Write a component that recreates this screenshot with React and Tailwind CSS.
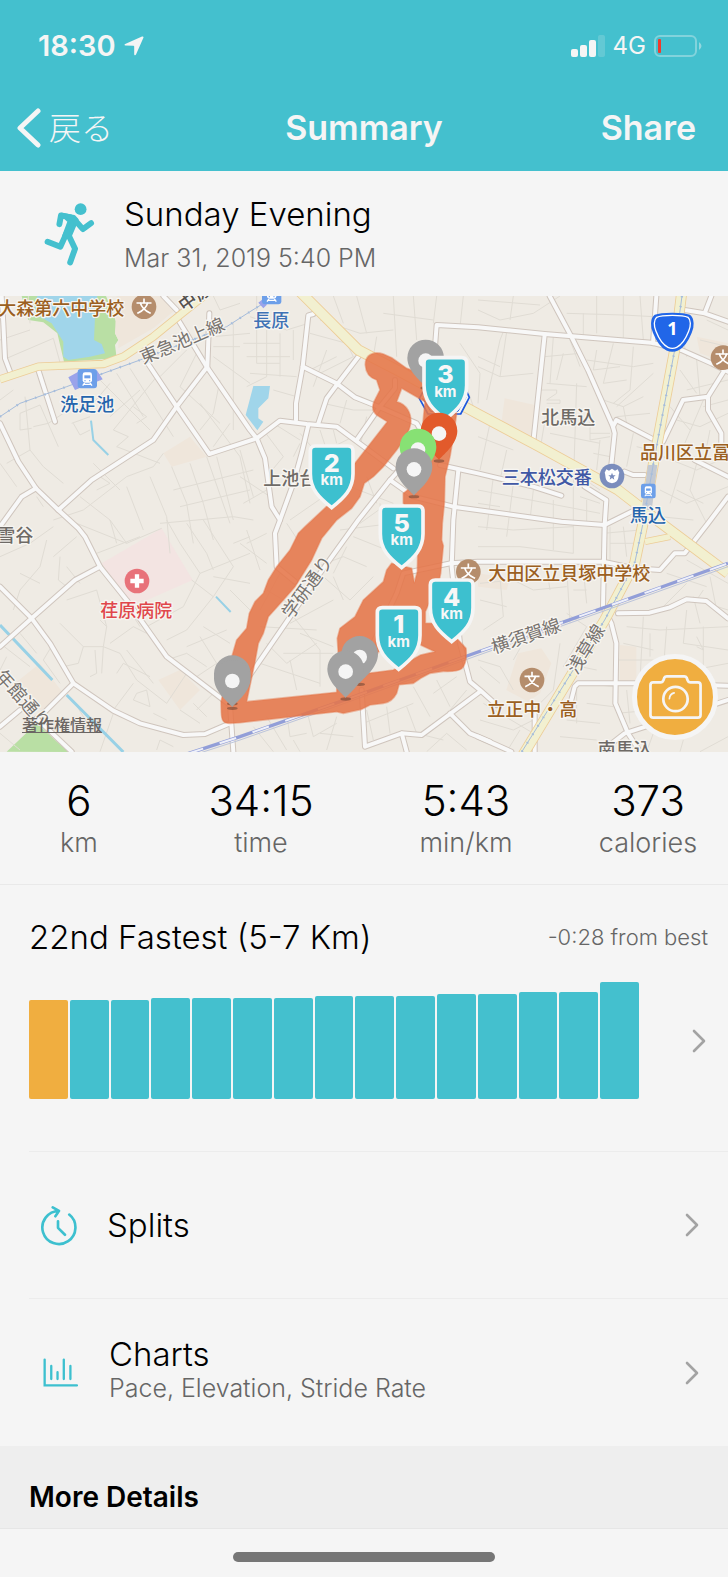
import { useState } from "react";

const bars = [99, 99, 99, 101, 101, 101, 101, 103, 103, 103, 105, 105, 107, 107, 117];

const stats = [
  { value: "6", label: "km" },
  { value: "34:15", label: "time" },
  { value: "5:43", label: "min/km" },
  { value: "373", label: "calories" },
];

// Map geometry, three units to one screen pixel
const lanes = [
  "M0 150L90 120M20 205L160 145L185 235M85 18L90 100M0 330L40 300M60 370L120 345L175 470M60 370V420L95 415M75 320L90 480L20 520M90 480L130 530L190 580M100 410L145 400L190 370",
  "M220 400L240 435L270 420M270 380L215 400M290 260L450 420M350 250L400 330L430 380M390 235L520 440M330 280L280 340L200 345M420 300L330 380M470 260L340 420L385 440L350 470M400 350L440 380L410 400",
  "M560 180L480 260M590 190L540 290L660 400M660 270L640 370L600 420M640 140L750 130M700 95V420M640 200L750 280M640 18L660 60L720 40M720 170H640M600 340L720 500L750 640M650 500L700 690M690 400L640 470",
  "M490 490L460 530L380 560L250 660L160 690M570 520L610 640L640 750M515 530L560 640L580 760M620 500L690 700M450 560L500 680L510 790M380 590L430 720M300 560L330 580L290 600M240 620L330 690L350 760M520 600L760 540M540 650L750 600M480 700L700 680L760 690M0 520L50 590M110 620L130 650M280 520L360 600M350 470L480 520",
  "M140 750L120 830L60 900L40 960M180 800L175 870L200 890M60 850L120 880M0 800L90 760L160 710M160 800L230 740M230 700L380 760L485 715M330 690L380 760M290 790L420 740M200 930L290 900L320 1010M200 830L240 880",
  "M500 690L540 760L600 850L750 790M560 700L620 790L640 840M610 690L700 830M575 870L640 920L700 830M600 850L550 950L440 1010M640 920L560 1020L500 1050M690 900L750 960M640 860L750 880M700 760L750 740M600 1040L650 1120L590 1160M560 1070L680 1020M610 1010L690 1060",
  "M300 990L320 1010L310 1070L250 1070L180 1000M250 1070L235 1120L190 1130M310 1070L360 1090L410 1170M285 1080L290 1150L270 1160M330 1060L400 1010L440 1030M310 1070L305 1150M350 1150L370 1120L450 1160M400 1230L450 1250L440 1200L410 1210L400 1230M410 1170L500 1240L560 1150M340 1260L400 1180M460 1270L500 1290M500 1110L560 1090L620 1130M540 1260L600 1300M470 1380L480 1350L520 1370M580 1240L620 1280M640 1210L590 1260",
  "M160 1060L130 1110L180 1180M20 1100L0 1140M60 1030L110 1090M90 1130L0 1060M350 900L420 1010M380 1080L460 1180M0 1330L60 1380M220 1230L280 1330M340 1270L300 1385M240 1320L300 1290",
  "M750 80L860 120L925 100M770 18V220H840M800 120V260L740 290M840 130V260M880 120V210M740 200H870M750 250L890 260M730 160H840M930 130L1040 160L1060 200M960 90L1080 130L1180 120M1000 18L1030 100M1070 18L1100 130M1180 18L1190 200M1150 70L1300 90M1240 18L1250 150M1310 18L1300 100M1390 18L1380 110M1130 140L1120 200M960 250L1060 200M940 290L980 180M1010 200L930 240",
  "M820 300L890 320M790 420L850 500L800 560M820 400L900 450M720 480L760 620M900 430L960 500M900 460L880 500M960 420L980 480L1060 440M1000 420L1010 460M720 560L810 620M730 640L800 600M1040 330L1020 400M1100 380L1080 470M970 340L1060 360L1140 360M1050 590L1180 640M1080 700L1150 650M1100 560L1130 640M1020 720L1180 700M1140 640L1150 760M1060 740L1160 780M860 700L900 760M870 690L1000 600",
  "M720 760L800 820M740 720L780 840M800 730L740 760M840 850L780 960M800 900L900 960M780 1010L950 1020M800 1060L860 1120L950 1060M880 980L960 1080V1190M950 830L1030 800L1100 830M970 860L1050 930L1120 860M1040 770L1000 850M1000 860L1030 930M850 1090H1000M780 1120L960 1180M870 1110L890 1200M1000 930L870 1000M900 1030L1000 1070",
  "M760 1310L820 1385M800 1280L860 1380M860 1270L870 1340L920 1330M920 1260L940 1340L1010 1300M1010 1280L980 1380M960 1330L1060 1340M880 1350L900 1385M1100 1260L1120 1350M1160 1250L1170 1330M1090 1300L1240 1240M1240 1190L1290 1280M1310 1170L1350 1250M1220 1250L1250 1330L1330 1350M1370 1160L1300 1210M1280 1385L1340 1330L1400 1380M1350 1270L1440 1350M1400 1200L1350 1260M1440 1130L1500 1180",
  "M1370 200L1420 350M1380 160L1440 250L1434 340M1434 60L1500 90L1600 70L1680 18M1434 30L1620 45M1540 18L1530 90M1520 125L1500 260L1434 230M1434 200L1500 230M1460 330L1500 150L1510 125M1500 260L1600 250M1660 140L1650 280M1690 190L1670 270M1634 200L1740 190M1640 280L1760 290M1710 150L1740 230M1750 70V150M1790 18V130M1700 70L1870 75M1870 18V150M1920 18L1930 150M1870 75L1960 80M1790 180L1780 240L1860 230M1840 160L1810 280L1880 270",
  "M1760 210L1900 230L1960 220M1900 170L1890 300L1840 340M1960 250L1850 350M1810 330L1870 350L1930 320M1850 380L1950 370M1870 350L1880 400M1620 300H1670V310L1640 330H1680V340H1640M1730 280L1720 590M1640 360L1620 480M1650 430L1800 460M1600 470L1720 540M1770 380V450L1830 440M1770 430H1830M1800 450L1790 540M1640 490L1800 600M1830 500L1780 490M1900 430L1880 530M1910 470L1950 480",
  "M1434 440L1540 480M1470 400L1440 540M1520 480L1500 570M1434 600L1800 670M1480 560L1460 720M1540 580L1520 740M1600 600L1590 690M1660 630L1660 780M1720 590V790M1434 640L1500 650M1434 710L1540 720L1720 710M1434 770H1560L1720 790M1740 620L1800 640M1760 630V700M1810 730L1920 720M1830 710V810M1870 710L1880 800M1830 760H1900",
  "M2040 240L2090 310M2060 300L2184 270M2090 210L2100 320M2010 350L2070 420M2030 390L2100 410L2184 370M2110 330L2050 470M2130 420L2110 520M2184 330L2110 350M1990 500L2090 540L2184 500M1980 600L2060 640L2184 590M2040 540L2010 640M2090 520L2070 600L2120 700M1980 680L2080 690M2030 600L2110 640M2184 120L2120 90M2050 150L2060 200M2184 170L2100 150",
  "M2060 810L2184 880M2000 850L2120 890M2060 880L1990 950M2110 900L2090 930L2184 960M2130 860L2150 960M2000 1010L1990 1140M2060 960L2050 1060L2184 1080M2080 920L2100 1000M1880 1010L1980 1020L2184 1010M1870 1060L1960 1080M1930 980L1920 1170M1950 1030V1100M2110 1010V1130M2090 1040L2110 1080L2090 1070M2184 1120L2080 1140M1850 1110H1960M1880 1200L1890 1300M1930 1190V1290M1850 1270L1960 1260",
  "M1440 880L1540 870L1600 900L1700 890M1500 860L1510 980M1700 830L1710 1000M1440 930L1520 950M1720 900H1760M1750 840L1760 940M1640 830L1650 900M1510 980L1450 1020M1700 970L1760 1010L1690 1130M1560 1075L1540 1110M1680 1060L1660 1200L1600 1260M1760 1180L1840 1190M1730 1190V1300M1434 1110L1500 1130L1540 1200M1440 1290L1540 1320L1600 1290M1450 1240L1600 1330M1520 1385L1560 1320M1700 1290L1800 1300M1680 1340L1790 1350M1760 1240L1840 1250M1740 1130L1790 1140M1960 1330L1940 1385M2050 1350L2040 1385M2184 1340L2100 1385",
];

const streets = [
  "M5 18L10 100L15 205L30 245",
  "M115 240L165 395",
  "M490 18L530 60M535 90L620 230L750 420L770 445L795 505L815 650L840 690",
  "M628 70L622 230L530 350L460 450L275 570L175 660",
  "M440 215L530 350L628 492L770 445L840 392L920 402L1010 410L1180 535",
  "M0 400L55 515L108 595L175 660L235 715L255 740L300 830L380 930L500 1100L690 1245L700 1385",
  "M0 710L65 620L108 595",
  "M300 830L225 870L95 985L0 1070",
  "M0 890L95 985L150 1060L220 1180L340 1262L420 1300L550 1335L615 1332L690 1300",
  "M220 1180L130 1270M0 1310L60 1260M110 1285L215 1385",
  "M940 72L925 76L908 230L888 340V390",
  "M908 230L1010 280L1065 322L1140 352L1250 400L1280 450",
  "M1075 200L1010 285L980 325L955 400M925 405L905 490L880 580L840 690L825 730L830 830L885 875",
  "M1185 270V295L1140 350L1070 450",
  "M1280 450L1170 570L1240 620L1360 650L1470 665L1684 695L1814 705L1894 665",
  "M1170 570L1075 690L960 850L750 1155",
  "M1305 170L1310 105L1434 112L1634 132L1954 158L2044 180L2134 220L2184 245",
  "M1320 525L1434 550L1600 590L1684 617",
  "M1375 540L1360 690L1355 830L1380 1060L1410 1175L1440 1200L1490 1245",
  "M1100 1100L1190 910L1210 850L1350 820L1434 815H1810L1904 835L1980 840L2024 790H2054L2124 700L2184 620",
  "M1649 18L1714 140L1764 240L1839 410L1844 430L1834 525",
  "M1839 410L1849 390L1954 445M1634 135L1600 455M1969 18L1959 160",
  "M2054 60L2114 70L2134 18M2114 70L2184 95",
  "M1989 455L2049 330L2124 320L2174 240M2124 320V360L2164 430V460M2084 510L2184 560",
  "M1874 545L1899 555H1934M1754 590L1819 630L1814 705L1809 950L1834 1000L1849 1060L1846 1240L1884 1330L1920 1385",
  "M1854 970L1949 968L2009 952L2059 928L2119 933L2184 985",
  "M1714 1230L1724 1190L1734 1180H1934L2184 1187M2184 1230L1874 1330L1804 1385",
  "M1085 1200L1095 1370L1205 1330L1265 1335L1440 1205M1205 1330L1220 1385M1350 1270L1410 1330L1470 1355",
  "M1434 1340L1534 1385M1604 1270V1385",
];

const highways = [
  { d: "M0 268L115 230L310 222L370 200L460 140L540 75L640 -5", w: 20 },
  { d: "M895 0L1075 180L1200 245L1434 372L1614 468L1854 600L1984 700L2184 850", w: 28 },
  { d: "M1935 755L2010 740", w: 16 },
  { d: "M2046 0L2024 180L1964 500L1929 700L1904 820L1814 990L1560 1410", w: 28 },
];

const labels = [
  { x: -5, y: 74, text: "大森第六中学校", fill: "#9b5f21" },
  { x: 181, y: 364, text: "洗足池", fill: "#2565ad" },
  { x: 430, y: 223, text: "東急池上線", fill: "#77736f", rotate: -23, light: true },
  { x: 553, y: 67, text: "中原街道", fill: "#55514e", rotate: -36 },
  { x: 760, y: 112, text: "長原", fill: "#3f72b5" },
  { x: 1624, y: 402, text: "北馬込", fill: "#6e6a66" },
  { x: 1505, y: 581, text: "三本松交番", fill: "#4058a5" },
  { x: 1920, y: 507, text: "品川区立冨士見", fill: "#9b5f21" },
  { x: 1890, y: 695, text: "馬込", fill: "#2565ad" },
  { x: 790, y: 584, text: "上池台", fill: "#6e6a66" },
  { x: -8, y: 755, text: "雪谷", fill: "#6e6a66" },
  { x: 301, y: 980, text: "荏原病院", fill: "#e0474c" },
  { x: -17, y: 1160, text: "年館通り", fill: "#77736f", rotate: 48, light: true },
  { x: 874, y: 990, text: "学研通り", fill: "#77736f", rotate: -54, light: true },
  { x: 1482, y: 1091, text: "横須賀線", fill: "#77736f", rotate: -19, light: true },
  { x: 1731, y: 1156, text: "浅草線", fill: "#77736f", rotate: -58, light: true },
  { x: 1465, y: 869, text: "大田区立貝塚中学校", fill: "#9b5f21" },
  { x: 1462, y: 1277, text: "立正中・高", fill: "#9b5f21" },
  { x: 1793, y: 1397, text: "南馬込", fill: "#6e6a66" },
];

function School({ x, y }) {
  return (
    <g transform={`translate(${x} ${y})`}>
      <circle r="37" fill="#b58d6c" />
      <g fill="none" stroke="#fff" strokeWidth="5" strokeLinecap="square">
        <path d="M0 -22V-13M-20 -11H20M-11 -11C-6 5 5 13 18 19M11 -11C6 5 -5 13 -18 19" />
      </g>
    </g>
  );
}

function Station({ x, y, s = 1 }) {
  return (
    <g transform={`translate(${x} ${y}) scale(${s})`}>
      <rect x="-29" y="-29" width="58" height="58" rx="9" fill="#6d9fe9" />
      <rect x="-14" y="-19" width="28" height="31" rx="7" fill="#fff" />
      <path d="M-9 -10H9V-1H-9Z" fill="#6d9fe9" />
      <circle cx="-7" cy="6" r="2" fill="#6d9fe9" />
      <circle cx="7" cy="6" r="2" fill="#6d9fe9" />
      <path d="M-8 13L-14 21M8 13L14 21M-10 17H10" stroke="#fff" strokeWidth="4" />
    </g>
  );
}

function Pin({ x, y, color = "#a2a2a2" }) {
  return (
    <g transform={`translate(${x} ${y})`}>
      <ellipse cy="90" rx="16" ry="5" fill="#5c3a2c" opacity="0.5" />
      <path d="M0 87C-8 74 -55 42 -55 0A55 55 0 0 1 55 0C55 42 8 74 0 87Z" fill={color} />
      <circle cy="8" r="22" fill="#f5f5f5" />
    </g>
  );
}

function KmMarker({ x, y, n }) {
  return (
    <g transform={`translate(${x} ${y})`} textAnchor="middle" fill="#f7f7f7" className="font-['Inter',sans-serif]">
      <path
        d="M-49 5H49Q64 5 64 20V88C64 135 38 160 0 190C-38 160 -64 135 -64 88V20Q-64 5 -49 5Z"
        fill="#3dc0cf"
        stroke="#f5f5f5"
        strokeWidth="11"
      />
      <text>
        <tspan x="0" y="82" fontSize="75" fontWeight="800">{n}</tspan>
        <tspan x="0" y="122" fontSize="45" fontWeight="700">km</tspan>
      </text>
    </g>
  );
}

function RouteMap() {
  return (
    <svg viewBox="0 18 2184 1368" className="block w-full" role="img" aria-label="Route map">
      <rect y="18" width="2184" height="1368" fill="#efebe4" />

      {/* Parks, water and building blocks */}
      <path d="M65 18L85 90L130 97L172 130L192 215L350 205L345 165L355 150L345 130L350 100L318 18Z" fill="#b9dfa4" />
      <path d="M112 18L100 70L155 100L190 155V200L205 210L270 200L315 190L305 162L282 150L285 80L292 18Z" fill="#a0d5ea" />
      <path d="M350 18H485L525 60L460 115L355 175L355 150L345 130Z" fill="#efe6db" />
      <path d="M490 490L570 440L620 500L515 530ZM1514 325L1604 345L1599 445L1504 400ZM2090 140L2184 160V220L2100 190ZM45 1180L120 1120L190 1210L130 1270ZM475 1170L540 1140L600 1200L540 1260ZM1519 1200L1554 1090L1624 1075L1654 1120L1620 1210L1585 1235ZM1859 1065L1909 1070V1170L1859 1175ZM1434 850L1530 865L1520 900L1434 890Z" fill="#efe6db" />
      <path d="M305 820L485 715L578 870L430 935H375Z" fill="#f3e4e2" />
      <path d="M20 1385L110 1300L205 1386Z" fill="#b9dfa4" />
      <path d="M760 288H810L805 325L775 355V385L790 395L772 421L737 375Z" fill="#a0d5ea" />

      <g fill="none" stroke="#e0dcd4" strokeWidth="3">
        {lanes.map((d) => <path key={d} d={d} />)}
      </g>
      <g fill="none" stroke="#98d1e6">
        <path d="M0 1005L157 1170M200 1215L370 1386" strokeWidth="9" />
        <path d="M273 392L280 450L325 495M648 920L692 966" strokeWidth="6" />
      </g>

      {/* Streets: casing first, then the surface */}
      <g fill="none" stroke="#cfc5bd" strokeWidth="18" strokeLinecap="round" strokeLinejoin="round">
        {streets.map((d) => <path key={d} d={d} />)}
      </g>
      <g fill="none" stroke="#f8f8f8" strokeWidth="12" strokeLinecap="round" strokeLinejoin="round">
        {streets.map((d) => <path key={d} d={d} />)}
      </g>
      <g fill="none" stroke="#edcd98" strokeLinejoin="round">
        {highways.map(({ d, w }) => <path key={d} d={d} strokeWidth={w + 5} />)}
      </g>
      <g fill="none" stroke="#f2f0d0" strokeLinejoin="round">
        {highways.map(({ d, w }) => <path key={d} d={d} strokeWidth={w} />)}
      </g>

      {/* Railways */}
      <path d="M1944 525H1972L1955 660H1925Z" fill="#c3c9d3" />
      <g fill="none" stroke="#a5bcdb">
        <path d="M0 380L60 340L200 290L420 210L680 110L750 65L810 28M2046 18L2024 180L1964 500L1929 700L1904 820L1814 990L1565 1386" strokeWidth="3" />
        <path d="M0 380L60 340L200 290L420 210L680 110L750 65L810 28M2046 18L2024 180L1964 500L1929 700L1904 820L1814 990L1565 1386" strokeWidth="7" strokeDasharray="4 26" />
      </g>
      <g fill="none">
        <path d="M560 1392L720 1340L1020 1235L1200 1170L1434 1086L1679 1000L1834 945L2184 820" stroke="#929ed8" strokeWidth="10" />
        <path d="M560 1392L720 1340L1020 1235L1200 1170L1434 1086L1679 1000L1834 945L2184 820" stroke="#eef0fa" strokeWidth="6" strokeDasharray="52 52" />
        <path d="M560 1402L720 1350L1020 1245L1200 1180L1434 1096L1679 1010L1834 955L2184 830" stroke="#bcc4da" strokeWidth="3" />
      </g>
      <path d="M205 262L235 245L238 295L225 300ZM290 240L308 268L290 275ZM775 38L800 18V45L790 55Z" fill="#9aa3ea" />

      {labels.map(({ x, y, text, fill, rotate = 0, light }) => (
        <text
          key={text}
          transform={`translate(${x} ${y}) rotate(${rotate})`}
          fontSize="54"
          fontWeight={light ? 400 : 500}
          fill={fill}
          stroke="#f7f5f1"
          strokeWidth="8"
          strokeLinejoin="round"
          paintOrder="stroke"
          className="font-['Noto_Sans_CJK_JP',sans-serif]"
        >
          {text}
        </text>
      ))}

      <School x={432} y={50} />
      <School x={2169} y={203} />
      <School x={1405} y={845} />
      <School x={1596} y={1170} />
      <Station x={262} y={266} />
      <Station x={815} y={14} />
      <Station x={1945} y={603} s={0.76} />
      <circle cx="411" cy="873" r="37" fill="#e8727a" />
      <path d="M411 853V893M391 873H431" stroke="#fff" strokeWidth="13" />
      <circle cx="1836" cy="558" r="37" fill="#7b8dbd" />
      <path d="M1819 538L1827 542L1836 536L1845 542L1853 538L1858 548C1853 557 1861 575 1836 580C1811 575 1819 557 1814 548Z" fill="#fff" />
      <path d="M1836 548L1839 556H1847L1841 561L1843 569L1836 564L1829 569L1831 561L1825 556H1833Z" fill="#7b8dbd" />

      {/* National route shields */}
      <g strokeLinejoin="round">
        <path d="M2017 74C2040 74 2058 76 2067 80C2077 88 2077 110 2070 125C2060 150 2045 170 2032 176Q2017 183 2002 176C1989 170 1974 150 1964 125C1957 110 1957 88 1967 80C1976 76 1994 74 2017 74Z" fill="#2166e8" stroke="#2166e8" strokeWidth="12" />
        <path d="M2017 76C2040 76 2056 78 2064 82C2073 90 2073 108 2066 124C2057 147 2043 166 2030 172Q2017 178 2004 172C1991 166 1977 147 1968 124C1961 108 1961 90 1970 82C1978 78 1994 76 2017 76Z" fill="#2166e8" stroke="#fff" strokeWidth="4" />
        <text x="2017" y="135" textAnchor="middle" fontSize="54" fontWeight="700" fill="#fff" className="font-['Noto_Sans',sans-serif]">1</text>
        <path d="M1272 300L1258 325L1284 372H1382L1408 322L1398 300" fill="#f5f5f5" stroke="#1c58dd" strokeWidth="5" />
        <path d="M1268 325L1292 364H1374L1398 322" fill="none" stroke="#1c58dd" strokeWidth="3" />
      </g>

      {/* Recorded track */}
      <path
        fillRule="evenodd"
        fill="#e57549"
        fillOpacity="0.88"
        stroke="#e57549"
        strokeOpacity="0.45"
        strokeWidth="5"
        strokeLinejoin="round"
        d="M1096 225C1095 195 1120 182 1150 192L1175 203L1220 235L1290 260L1330 330L1370 370L1360 440L1350 500L1335 560L1333 640L1327 700L1325 750L1330 767L1322 850L1318 870L1276 965V1000L1320 1000L1375 1050L1398 1075Q1402 1120 1385 1136Q1370 1146 1330 1144L1290 1150L1262 1165L1240 1180L1197 1184L1190 1210Q1175 1238 1150 1240L1110 1245L1085 1258L1030 1270L1010 1265L720 1298L690 1300C660 1300 665 1280 663 1235L697 1095L710 1050L740 1015L748 970L765 935L790 910L805 870L830 830L870 780L895 730L915 710L990 640L1065 520L1162 395L1130 375Q1112 360 1122 335L1140 300L1130 270Q1098 260 1096 225ZM1275 335L1205 295L1190 335C1225 345 1235 375 1232 400C1228 430 1205 460 1190 480L1150 530L1120 560L1093 580L1080 620L1055 655L1010 690L965 745L935 810L885 890L850 930L805 980L790 1030L775 1060L765 1115L740 1235L1010 1207L1015 1095L1012 1045L1020 1015L1065 980L1090 930L1150 875L1160 840L1175 820L1235 835L1243 878L1252 845L1255 700L1210 640V610L1275 560L1265 440ZM1105 1150L1135 1085L1262 1065L1305 1085L1262 1095L1180 1140Z"
      />

      <Pin x={1277} y={204} />
      <KmMarker x={1336} y={198} n="3" />
      <Pin x={1317} y={423} color="#e25a2b" />
      <Pin x={1254} y={471} color="#87e174" />
      <Pin x={1242} y={530} />
      <KmMarker x={995} y={463} n="2" />
      <KmMarker x={1205} y={643} n="5" />
      <KmMarker x={1355} y={865} n="4" />
      <KmMarker x={1196} y={948} n="1" />
      <Pin x={1079} y={1093} />
      <Pin x={1037} y={1137} />
      <Pin x={697} y={1151} />
      <Pin x={697} y={1165} />
    </svg>
  );
}

function Chevron() {
  return (
    <svg viewBox="0 0 14 24" className="h-6 w-3.5 shrink-0" fill="none" stroke="#a3a3a3" strokeWidth="2.6" strokeLinecap="round" strokeLinejoin="round">
      <path d="M2 2L12 12L2 22" />
    </svg>
  );
}

function StatusBar() {
  return (
    <div className="flex h-8 items-center justify-between pr-[26px] pl-[38px]">
      <div className="flex items-center gap-2">
        <span className="text-[29px] leading-8 font-semibold">18:30</span>
        <svg viewBox="0 0 20 20" className="size-5" fill="currentColor">
          <path d="M18 .6Q20 0 19.3 2L12 18.6Q11 20 10.2 18.4V10.6Q10.2 9.8 9.4 9.8L1.4 9.6Q-.4 8.9 1.2 8Z" />
        </svg>
      </div>
      <div className="flex items-center gap-2">
        <svg viewBox="0 0 34 22" className="h-[22px] w-[34px]" fill="currentColor">
          <rect y="14" width="7" height="8" rx="2" />
          <rect x="9" y="10" width="7" height="12" rx="2" />
          <rect x="18" y="5" width="7" height="17" rx="2" />
          <rect x="27" width="7" height="22" rx="2" opacity="0.18" />
        </svg>
        <span className="text-2xl leading-8">4G</span>
        <svg viewBox="0 0 48 22" className="h-[22px] w-12">
          <rect x="1" y="1" width="41" height="20" rx="5" fill="none" stroke="#f5f5f5" strokeOpacity="0.35" strokeWidth="2" />
          <path d="M45 7Q47.500 9 47.500 11T45 15Z" fill="#f5f5f5" opacity="0.45" />
          <rect x="4" y="4" width="3" height="14" rx="1" fill="#f13a2c" />
        </svg>
      </div>
    </div>
  );
}

export default function App() {
  const [photoOpen, setPhotoOpen] = useState(false);

  return (
    <div className="min-h-screen bg-[#f5f5f5] font-['Inter',sans-serif] text-black">
      {/* Header */}
      <header className="bg-[#44c0ce] pt-[30px] pb-[23px] text-[#f5f5f5]">
        <StatusBar />
        <nav className="mt-[46px] flex items-center pr-8 pl-[17px]">
          <div className="flex-1">
            <button className="flex h-10 items-center gap-2">
              <svg viewBox="0 0 24 40" className="h-10 w-6" fill="none" stroke="currentColor" strokeWidth="5" strokeLinecap="round" strokeLinejoin="round">
                <path d="M21 3L3 20L21 37" />
              </svg>
              <span className="pb-1 font-['Noto_Sans_CJK_JP',sans-serif] text-[32px] leading-9 font-light">戻る</span>
            </button>
          </div>
          <h1 className="pl-[15px] text-[34px] leading-10 font-semibold">Summary</h1>
          <div className="flex flex-1 justify-end">
            <button className="text-[34px] leading-10 font-semibold">Share</button>
          </div>
        </nav>
      </header>

      {/* Activity title */}
      <section className="flex items-center gap-[29px] pt-[23px] pb-[22px] pl-11">
        <svg viewBox="130 548 156 194" className="h-16 w-[51px]" fill="#44c0ce" stroke="#44c0ce" strokeLinecap="round" strokeLinejoin="round">
          <circle cx="242" cy="569" r="18" stroke="none" />
          <path d="M184 585L222 592L231 602L208 656L190 652L207 606Z" strokeWidth="10" />
          <path d="M177 615L182 588L212 594M226 604L249 630L274 612M141 669L180 684L200 640M205 648L225 690L210 732" fill="none" strokeWidth="18" />
        </svg>
        <div>
          <h2 className="text-[33px] leading-10 font-light">Sunday Evening</h2>
          <p className="mt-2 text-[25px] leading-8 font-light text-[#666]">Mar 31, 2019 5:40 PM</p>
        </div>
      </section>

      {/* Map */}
      <section className="relative overflow-hidden">
        <RouteMap />
        <a href="#legal" className="absolute bottom-4 left-[22px] font-['Noto_Sans_CJK_JP',sans-serif] text-base leading-6 font-medium text-[#6b6663] underline">
          著作権情報
        </a>
        <button
          aria-label="Add photo"
          aria-pressed={photoOpen}
          onClick={() => setPhotoOpen(!photoOpen)}
          className="absolute right-2.5 bottom-3 flex size-[86px] items-center justify-center rounded-full border-[5px] border-[#f5f5f5] bg-[#f0ae40]"
        >
          <svg viewBox="0 0 156 130" className="h-11 w-[53px]" fill="none" stroke="#f5f5f5" strokeWidth="8" strokeLinejoin="round" strokeLinecap="round">
            <path d="M12 22H34Q40 22 42 16L45 8Q47 4 52 4H104Q109 4 111 8L114 16Q116 22 122 22H144Q152 22 152 30V118Q152 126 144 126H12Q4 126 4 118V30Q4 22 12 22Z" />
            <circle cx="78" cy="71" r="36" />
            <path d="M60 70Q61 56 74 53" strokeWidth="5" />
          </svg>
        </button>
      </section>

      {/* Totals */}
      <dl className="grid grid-cols-[158fr_206fr_204fr_160fr] border-b border-[#e9e9e9] pt-[25px] pb-[23px] text-center">
        {stats.map((s) => (
          <div key={s.label} className="flex flex-col-reverse">
            <dt className="text-[27px] leading-9 font-light text-[#666]">{s.label}</dt>
            <dd className="text-[42px] leading-[48px] font-light">{s.value}</dd>
          </div>
        ))}
      </dl>

      {/* Ranking */}
      <section className="pt-8">
        <div className="flex items-center justify-between pr-5 pl-[29px]">
          <h2 className="text-[33px] leading-10 font-light">22nd Fastest (5-7 Km)</h2>
          <p className="text-[22px] leading-10 font-light text-[#666]">-0:28 from best</p>
        </div>
        <div className="mt-[25px] flex items-center pr-[22px] pb-[52px] pl-[29px]">
          <div className="flex flex-1 items-end gap-0.5">
            {bars.map((h, i) => (
              <div
                key={i}
                className={`flex-1 rounded-xs ${i === 0 ? "bg-[#f0ae40]" : "bg-[#44c0ce]"}`}
                style={{ height: h }}
              />
            ))}
          </div>
          <button aria-label="Ranking" className="ml-[53px]">
            <Chevron />
          </button>
        </div>
      </section>

      {/* Detail rows */}
      <a href="#splits" className="ml-[29px] flex h-[148px] items-center border-y border-[#ececec] pr-[29px] pl-2.5">
        <svg viewBox="60 44 112 124" className="h-[41px] w-[38px]" fill="none" stroke="#3dc0cf" strokeWidth="8" strokeLinecap="round" strokeLinejoin="round">
          <path d="M150 73A50 50 0 1 1 119 62M100 51L119 62L108 78M116 93V113L137 134" />
        </svg>
        <span className="ml-[30px] flex-1 text-[33px] leading-9 font-light">Splits</span>
        <Chevron />
      </a>
      <a href="#charts" className="ml-[29px] flex h-[147px] items-center pr-[29px] pl-3.5">
        <svg viewBox="68 505 106 86" className="h-[29px] w-[35px]" fill="none" stroke="#3dc0cf" strokeWidth="7" strokeLinecap="round">
          <path d="M73 509V587H171M93 528V568M112 547V568M131 509V568M151 528V568" />
        </svg>
        <span className="ml-[31px] flex-1 pb-1.5">
          <span className="block text-[33px] leading-9 font-light">Charts</span>
          <span className="block text-[25px] leading-8 font-light text-[#666]">Pace, Elevation, Stride Rate</span>
        </span>
        <Chevron />
      </a>

      <h2 className="border-b border-[#e6e6e6] bg-[#eee] pt-[33px] pb-[13px] pl-[29px] text-[28px] leading-9 font-semibold">More Details</h2>

      <div className="flex justify-center pt-[23px] pb-[15px]">
        <div className="h-2.5 w-[36%] rounded-full bg-[#767676]" />
      </div>
    </div>
  );
}
